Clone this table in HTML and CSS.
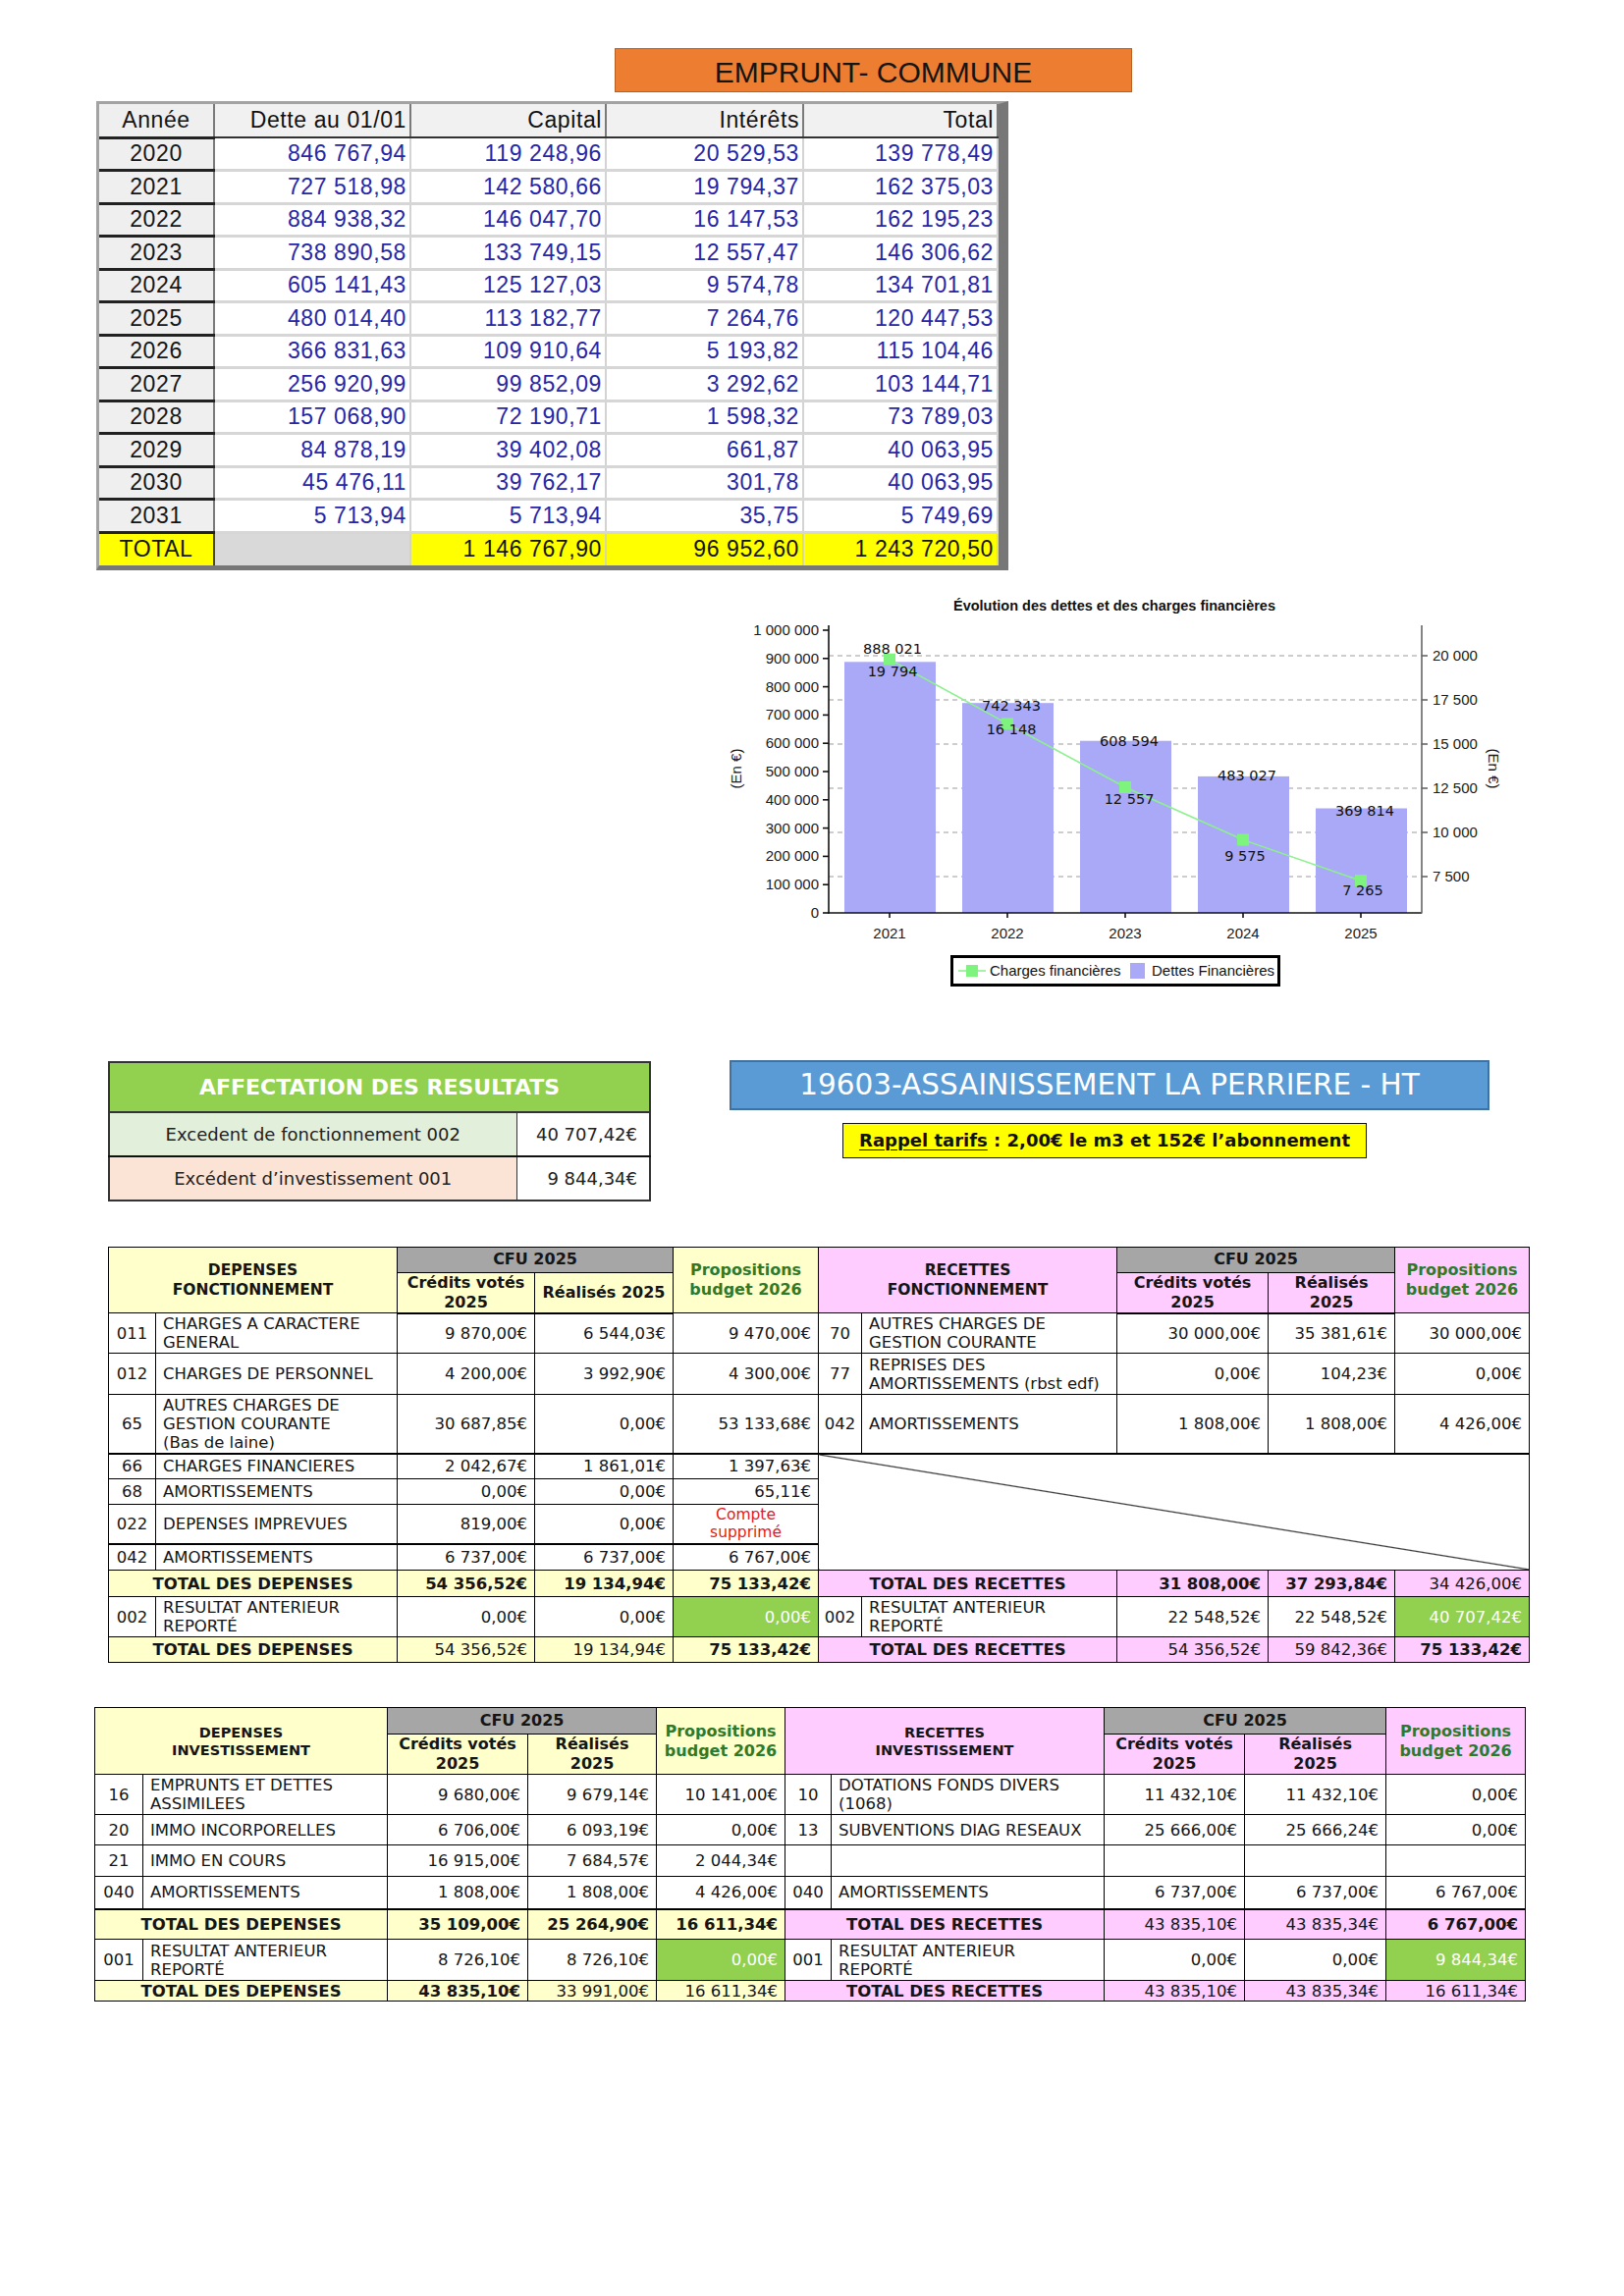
FILE: index.html
```html
<!DOCTYPE html>
<html lang="fr">
<head>
<meta charset="utf-8">
<title>Emprunt - Assainissement</title>
<link rel="stylesheet" href="styles.css">
</head>
<body>
<div class="page">
  <div class="head"><div class="orange">EMPRUNT- COMMUNE</div></div>

  <div class="loan-row">
    <div class="loan">
      <table class="loan-t">
        <colgroup><col class="w-an"><col class="w-d"><col class="w-c"><col class="w-i"><col class="w-t"></colgroup>
        <tr class="lh"><th class="yr">Année</th><th>Dette au 01/01</th><th>Capital</th><th>Intérêts</th><th>Total</th></tr>
        <tr><td class="yr">2020</td><td>846 767,94</td><td>119 248,96</td><td>20 529,53</td><td>139 778,49</td></tr>
        <tr><td class="yr">2021</td><td>727 518,98</td><td>142 580,66</td><td>19 794,37</td><td>162 375,03</td></tr>
        <tr><td class="yr">2022</td><td>884 938,32</td><td>146 047,70</td><td>16 147,53</td><td>162 195,23</td></tr>
        <tr><td class="yr">2023</td><td>738 890,58</td><td>133 749,15</td><td>12 557,47</td><td>146 306,62</td></tr>
        <tr><td class="yr">2024</td><td>605 141,43</td><td>125 127,03</td><td>9 574,78</td><td>134 701,81</td></tr>
        <tr><td class="yr">2025</td><td>480 014,40</td><td>113 182,77</td><td>7 264,76</td><td>120 447,53</td></tr>
        <tr><td class="yr">2026</td><td>366 831,63</td><td>109 910,64</td><td>5 193,82</td><td>115 104,46</td></tr>
        <tr><td class="yr">2027</td><td>256 920,99</td><td>99 852,09</td><td>3 292,62</td><td>103 144,71</td></tr>
        <tr><td class="yr">2028</td><td>157 068,90</td><td>72 190,71</td><td>1 598,32</td><td>73 789,03</td></tr>
        <tr><td class="yr">2029</td><td>84 878,19</td><td>39 402,08</td><td>661,87</td><td>40 063,95</td></tr>
        <tr><td class="yr">2030</td><td>45 476,11</td><td>39 762,17</td><td>301,78</td><td>40 063,95</td></tr>
        <tr><td class="yr">2031</td><td>5 713,94</td><td>5 713,94</td><td>35,75</td><td>5 749,69</td></tr>
        <tr class="ltot"><td class="yr ytot">TOTAL</td><td class="gtot"></td><td>1 146 767,90</td><td>96 952,60</td><td>1 243 720,50</td></tr>
      </table>
    </div>
  </div>

  <div class="chart-row">
    <svg class="chart" width="820" height="420" viewBox="730 600 820 420" xmlns="http://www.w3.org/2000/svg">
      <text x="1135" y="621" text-anchor="middle" class="c-title">Évolution des dettes et des charges financières</text>
      <g stroke="#bdbdbd" stroke-width="1.3" stroke-dasharray="5 4">
        <line x1="844" y1="667" x2="1448" y2="667"/>
        <line x1="844" y1="712" x2="1448" y2="712"/>
        <line x1="844" y1="757" x2="1448" y2="757"/>
        <line x1="844" y1="802" x2="1448" y2="802"/>
        <line x1="844" y1="847" x2="1448" y2="847"/>
        <line x1="844" y1="892" x2="1448" y2="892"/>
      </g>
      <g fill="#a9a9f7">
        <rect x="860" y="673.3" width="93" height="255.7"/>
        <rect x="980" y="715.2" width="93" height="213.8"/>
        <rect x="1100" y="753.7" width="93" height="175.3"/>
        <rect x="1220" y="789.9" width="93" height="139.1"/>
        <rect x="1340" y="822.5" width="93" height="106.5"/>
      </g>
      <g stroke="#111" stroke-width="1.6">
        <line x1="844" y1="636" x2="844" y2="929.5"/>
        <line x1="843" y1="929" x2="1448" y2="929"/>
        <line x1="838" y1="641" x2="844" y2="641"/>
        <line x1="838" y1="669.8" x2="844" y2="669.8"/>
        <line x1="838" y1="698.6" x2="844" y2="698.6"/>
        <line x1="838" y1="727.4" x2="844" y2="727.4"/>
        <line x1="838" y1="756.2" x2="844" y2="756.2"/>
        <line x1="838" y1="785" x2="844" y2="785"/>
        <line x1="838" y1="813.8" x2="844" y2="813.8"/>
        <line x1="838" y1="842.6" x2="844" y2="842.6"/>
        <line x1="838" y1="871.4" x2="844" y2="871.4"/>
        <line x1="838" y1="900.2" x2="844" y2="900.2"/>
        <line x1="838" y1="929" x2="844" y2="929"/>
        <line x1="906" y1="929" x2="906" y2="934"/>
        <line x1="1026" y1="929" x2="1026" y2="934"/>
        <line x1="1146" y1="929" x2="1146" y2="934"/>
        <line x1="1266" y1="929" x2="1266" y2="934"/>
        <line x1="1386" y1="929" x2="1386" y2="934"/>
      </g>
      <g stroke="#666" stroke-width="1.6">
        <line x1="1448" y1="636" x2="1448" y2="929.5"/>
        <line x1="1448" y1="667" x2="1454" y2="667"/>
        <line x1="1448" y1="712" x2="1454" y2="712"/>
        <line x1="1448" y1="757" x2="1454" y2="757"/>
        <line x1="1448" y1="802" x2="1454" y2="802"/>
        <line x1="1448" y1="847" x2="1454" y2="847"/>
        <line x1="1448" y1="892" x2="1454" y2="892"/>
      </g>
      <g class="c-ax" text-anchor="end">
        <text x="834" y="646">1 000 000</text>
        <text x="834" y="674.8">900 000</text>
        <text x="834" y="703.6">800 000</text>
        <text x="834" y="732.4">700 000</text>
        <text x="834" y="761.2">600 000</text>
        <text x="834" y="790">500 000</text>
        <text x="834" y="818.8">400 000</text>
        <text x="834" y="847.6">300 000</text>
        <text x="834" y="876.4">200 000</text>
        <text x="834" y="905.2">100 000</text>
        <text x="834" y="934">0</text>
      </g>
      <g class="c-ax" text-anchor="start">
        <text x="1459" y="672">20 000</text>
        <text x="1459" y="717">17 500</text>
        <text x="1459" y="762">15 000</text>
        <text x="1459" y="807">12 500</text>
        <text x="1459" y="852">10 000</text>
        <text x="1459" y="897">7 500</text>
      </g>
      <g class="c-ax" text-anchor="middle">
        <text x="906" y="955">2021</text>
        <text x="1026" y="955">2022</text>
        <text x="1146" y="955">2023</text>
        <text x="1266" y="955">2024</text>
        <text x="1386" y="955">2025</text>
      </g>
      <text class="c-ax" text-anchor="middle" x="750" y="787" transform="rotate(-90 750 782)">(En €)</text>
      <text class="c-ax" text-anchor="middle" x="1521" y="787" transform="rotate(90 1521 782)">(En €)</text>
      <polyline points="906,670.7 1026,736.3 1146,801 1266,854.6 1386,896.2" fill="none" stroke="#8ef08e" stroke-width="1.6"/>
      <g fill="#7ef47e">
        <rect x="900" y="664.7" width="12" height="12"/>
        <rect x="1020" y="730.3" width="12" height="12"/>
        <rect x="1140" y="795" width="12" height="12"/>
        <rect x="1260" y="848.6" width="12" height="12"/>
        <rect x="1380" y="890.2" width="12" height="12"/>
      </g>
      <g class="c-dl" text-anchor="middle">
        <text x="909" y="665">888 021</text>
        <text x="909" y="688">19 794</text>
        <text x="1030" y="723">742 343</text>
        <text x="1030" y="747">16 148</text>
        <text x="1150" y="759">608 594</text>
        <text x="1150" y="818">12 557</text>
        <text x="1270" y="794">483 027</text>
        <text x="1268" y="876">9 575</text>
        <text x="1390" y="830">369 814</text>
        <text x="1388" y="911">7 265</text>
      </g>
      <rect x="969.5" y="973.5" width="333" height="29" fill="#fff" stroke="#000" stroke-width="3"/>
      <line x1="976" y1="988" x2="1004" y2="988" stroke="#8ef08e" stroke-width="1.6"/>
      <rect x="984" y="982" width="12" height="12" fill="#7ef47e"/>
      <text class="c-lg" x="1008" y="993">Charges financières</text>
      <rect x="1151" y="980" width="15" height="16" fill="#a9a9f7"/>
      <text class="c-lg" x="1173" y="993">Dettes Financières</text>
    </svg>
  </div>

  <div class="mid">
    <table class="aff">
      <colgroup><col class="aff-c1"><col class="aff-c2"></colgroup>
      <tr><th colspan="2">AFFECTATION DES RESULTATS</th></tr>
      <tr class="aff-r1"><td class="aff-l fon">Excedent de fonctionnement 002</td><td class="aff-v">40 707,42€</td></tr>
      <tr><td class="aff-l inv">Excédent d’investissement 001</td><td class="aff-v">9 844,34€</td></tr>
    </table>
    <div class="mid-right">
      <div class="blue">19603-ASSAINISSEMENT LA PERRIERE - HT</div>
      <div class="yel"><span class="u">Rappel tarifs</span>&nbsp;: 2,00€ le m3 et 152€ l’abonnement</div>
    </div>
  </div>

  <div class="fonct-row">
    <table class="bud fonct">
      <colgroup>
        <col style="width:48px"><col style="width:246px"><col style="width:140px"><col style="width:141px"><col style="width:148px">
        <col style="width:44px"><col style="width:260px"><col style="width:154px"><col style="width:129px"><col style="width:137px">
      </colgroup>
      <tr class="f-h1">
        <th colspan="2" rowspan="2" class="cy hm">DEPENSES<br>FONCTIONNEMENT</th>
        <th colspan="2" class="cg">CFU 2025</th>
        <th rowspan="2" class="cy prop">Propositions<br>budget 2026</th>
        <th colspan="2" rowspan="2" class="cp hm">RECETTES<br>FONCTIONNEMENT</th>
        <th colspan="2" class="cg">CFU 2025</th>
        <th rowspan="2" class="cp prop">Propositions<br>budget 2026</th>
      </tr>
      <tr class="f-h2 thick">
        <th class="cy">Crédits votés<br>2025</th><th class="cy">Réalisés 2025</th>
        <th class="cp">Crédits votés<br>2025</th><th class="cp">Réalisés<br>2025</th>
      </tr>
      <tr class="f-r41">
        <td class="code">011</td><td class="lbl">CHARGES A CARACTERE<br>GENERAL</td><td class="num">9 870,00€</td><td class="num">6 544,03€</td><td class="num">9 470,00€</td>
        <td class="code">70</td><td class="lbl">AUTRES CHARGES DE<br>GESTION COURANTE</td><td class="num">30 000,00€</td><td class="num">35 381,61€</td><td class="num">30 000,00€</td>
      </tr>
      <tr class="f-r42">
        <td class="code">012</td><td class="lbl">CHARGES DE PERSONNEL</td><td class="num">4 200,00€</td><td class="num">3 992,90€</td><td class="num">4 300,00€</td>
        <td class="code">77</td><td class="lbl">REPRISES DES<br>AMORTISSEMENTS (rbst edf)</td><td class="num">0,00€</td><td class="num">104,23€</td><td class="num">0,00€</td>
      </tr>
      <tr class="f-r60 thick">
        <td class="code">65</td><td class="lbl">AUTRES CHARGES DE<br>GESTION COURANTE<br>(Bas de laine)</td><td class="num">30 687,85€</td><td class="num">0,00€</td><td class="num">53 133,68€</td>
        <td class="code">042</td><td class="lbl">AMORTISSEMENTS</td><td class="num">1 808,00€</td><td class="num">1 808,00€</td><td class="num">4 426,00€</td>
      </tr>
      <tr class="f-r26">
        <td class="code">66</td><td class="lbl">CHARGES FINANCIERES</td><td class="num">2 042,67€</td><td class="num">1 861,01€</td><td class="num">1 397,63€</td>
        <td colspan="5" rowspan="4" class="diag"></td>
      </tr>
      <tr class="f-r26">
        <td class="code">68</td><td class="lbl">AMORTISSEMENTS</td><td class="num">0,00€</td><td class="num">0,00€</td><td class="num">65,11€</td>
      </tr>
      <tr class="f-r40 thick-l">
        <td class="code">022</td><td class="lbl">DEPENSES IMPREVUES</td><td class="num">819,00€</td><td class="num">0,00€</td><td class="red">Compte<br>supprimé</td>
      </tr>
      <tr class="f-r27">
        <td class="code">042</td><td class="lbl">AMORTISSEMENTS</td><td class="num">6 737,00€</td><td class="num">6 737,00€</td><td class="num">6 767,00€</td>
      </tr>
      <tr class="f-r27">
        <td colspan="2" class="cy tt">TOTAL DES DEPENSES</td><td class="cy num b">54 356,52€</td><td class="cy num b">19 134,94€</td><td class="cy num b">75 133,42€</td>
        <td colspan="2" class="cp tt">TOTAL DES RECETTES</td><td class="cp num b">31 808,00€</td><td class="cp num b">37 293,84€</td><td class="cp num">34 426,00€</td>
      </tr>
      <tr class="f-r41">
        <td class="code">002</td><td class="lbl">RESULTAT ANTERIEUR<br>REPORTÉ</td><td class="num">0,00€</td><td class="num">0,00€</td><td class="num green">0,00€</td>
        <td class="code">002</td><td class="lbl">RESULTAT ANTERIEUR<br>REPORTÉ</td><td class="num">22 548,52€</td><td class="num">22 548,52€</td><td class="num green">40 707,42€</td>
      </tr>
      <tr class="f-r26">
        <td colspan="2" class="cy tt">TOTAL DES DEPENSES</td><td class="cy num">54 356,52€</td><td class="cy num">19 134,94€</td><td class="cy num b">75 133,42€</td>
        <td colspan="2" class="cp tt">TOTAL DES RECETTES</td><td class="cp num">54 356,52€</td><td class="cp num">59 842,36€</td><td class="cp num b">75 133,42€</td>
      </tr>
    </table>
  </div>

  <div class="inv-row">
    <table class="bud inv">
      <colgroup>
        <col style="width:49px"><col style="width:249px"><col style="width:143px"><col style="width:131px"><col style="width:131px">
        <col style="width:47px"><col style="width:278px"><col style="width:143px"><col style="width:144px"><col style="width:142px">
      </colgroup>
      <tr class="i-h1">
        <th colspan="2" rowspan="2" class="cy hs">DEPENSES<br>INVESTISSEMENT</th>
        <th colspan="2" class="cg">CFU 2025</th>
        <th rowspan="2" class="cy prop">Propositions<br>budget 2026</th>
        <th colspan="2" rowspan="2" class="cp hs">RECETTES<br>INVESTISSEMENT</th>
        <th colspan="2" class="cg">CFU 2025</th>
        <th rowspan="2" class="cp prop">Propositions<br>budget 2026</th>
      </tr>
      <tr class="i-h2">
        <th class="cy">Crédits votés<br>2025</th><th class="cy">Réalisés<br>2025</th>
        <th class="cp">Crédits votés<br>2025</th><th class="cp">Réalisés<br>2025</th>
      </tr>
      <tr class="i-r41">
        <td class="code">16</td><td class="lbl">EMPRUNTS ET DETTES<br>ASSIMILEES</td><td class="num">9 680,00€</td><td class="num">9 679,14€</td><td class="num">10 141,00€</td>
        <td class="code">10</td><td class="lbl">DOTATIONS FONDS DIVERS<br>(1068)</td><td class="num">11 432,10€</td><td class="num">11 432,10€</td><td class="num">0,00€</td>
      </tr>
      <tr class="i-r31">
        <td class="code">20</td><td class="lbl">IMMO INCORPORELLES</td><td class="num">6 706,00€</td><td class="num">6 093,19€</td><td class="num">0,00€</td>
        <td class="code">13</td><td class="lbl">SUBVENTIONS DIAG RESEAUX</td><td class="num">25 666,00€</td><td class="num">25 666,24€</td><td class="num">0,00€</td>
      </tr>
      <tr class="i-r32">
        <td class="code">21</td><td class="lbl">IMMO EN COURS</td><td class="num">16 915,00€</td><td class="num">7 684,57€</td><td class="num">2 044,34€</td>
        <td class="code"></td><td class="lbl"></td><td class="num"></td><td class="num"></td><td class="num"></td>
      </tr>
      <tr class="i-r33 thick">
        <td class="code">040</td><td class="lbl">AMORTISSEMENTS</td><td class="num">1 808,00€</td><td class="num">1 808,00€</td><td class="num">4 426,00€</td>
        <td class="code">040</td><td class="lbl">AMORTISSEMENTS</td><td class="num">6 737,00€</td><td class="num">6 737,00€</td><td class="num">6 767,00€</td>
      </tr>
      <tr class="i-r31">
        <td colspan="2" class="cy tt">TOTAL DES DEPENSES</td><td class="cy num b">35 109,00€</td><td class="cy num b">25 264,90€</td><td class="cy num b">16 611,34€</td>
        <td colspan="2" class="cp tt">TOTAL DES RECETTES</td><td class="cp num">43 835,10€</td><td class="cp num">43 835,34€</td><td class="cp num b">6 767,00€</td>
      </tr>
      <tr class="i-r42">
        <td class="code">001</td><td class="lbl">RESULTAT ANTERIEUR<br>REPORTÉ</td><td class="num">8 726,10€</td><td class="num">8 726,10€</td><td class="num green">0,00€</td>
        <td class="code">001</td><td class="lbl">RESULTAT ANTERIEUR<br>REPORTÉ</td><td class="num">0,00€</td><td class="num">0,00€</td><td class="num green">9 844,34€</td>
      </tr>
      <tr class="i-r21">
        <td colspan="2" class="cy tt">TOTAL DES DEPENSES</td><td class="cy num b">43 835,10€</td><td class="cy num">33 991,00€</td><td class="cy num">16 611,34€</td>
        <td colspan="2" class="cp tt">TOTAL DES RECETTES</td><td class="cp num">43 835,10€</td><td class="cp num">43 835,34€</td><td class="cp num">16 611,34€</td>
      </tr>
    </table>
  </div>
</div>
</body>
</html>
```

FILE: styles.css
```css
* { box-sizing: border-box; }
html, body { margin: 0; padding: 0; background: #fff; }
body { font-family: "DejaVu Sans", "Noto Sans", sans-serif; color: #111; }
.page { width: 1654px; height: 2339px; overflow: hidden; }

/* ---- title ---- */
.head { padding: 49px 0 0 626px; }
.orange {
  width: 527px; height: 45px;
  background: #ed7d31; border: 1px solid #b8601f;
  display: flex; align-items: center; justify-content: center;
  font-family: "Liberation Sans Narrow", "Liberation Sans", sans-serif;
  font-size: 30px; color: #151515; padding-top: 4px;
}

/* ---- loan table ---- */
.loan-row { padding: 9px 0 0 98px; }
.loan {
  display: inline-block;
  border-top: 3px solid #a3a3a3; border-left: 3px solid #a3a3a3;
  border-right: 10px solid #777; border-bottom: 5px solid #777;
  box-shadow: inset -1px -1px 0 #222;
}
.loan-t {
  border-collapse: collapse; table-layout: fixed; width: 915px;
  font-family: "Liberation Sans Narrow", "Liberation Sans", sans-serif;
  font-size: 23px; letter-spacing: 0.6px;
}
.w-an { width: 117px; } .w-d { width: 200px; } .w-c { width: 199px; } .w-i { width: 201px; } .w-t { width: 198px; }
.loan-t th {
  height: 34px; font-weight: normal; text-align: right; padding: 0 3px 0 0;
  background: #f1f1f1; color: #111;
  border-right: 2px solid #7a7a7a; border-bottom: 2px solid #333;
}
.loan-t td {
  height: 33.5px; text-align: right; padding: 0 3px 0 0; color: #2626a8;
  border-right: 2px solid #d3d3d3; border-bottom: 3px solid #d6d6d6;
  background: #fff;
}
.loan-t .yr {
  text-align: center; padding: 0; color: #151515; background: #efefef;
  border-right: 2px solid #7a7a7a; border-bottom: 3px solid #222;
}
.loan-t .ltot td { background: #ffff00; color: #151515; border-bottom: 0; border-right: 2px solid #d8d8a0; }
.loan-t .ltot .ytot { background: #ffff00; border-right: 2px solid #444; }
.loan-t .ltot .gtot { background: #d9d9d9; }

/* ---- chart ---- */
.chart-row { padding: 16px 0 0 730px; height: 443px; }
.chart { display: block; }
.c-title { font-family: "Liberation Sans", sans-serif; font-size: 14.5px; font-weight: bold; fill: #111; }
.c-ax { font-family: "Liberation Sans", sans-serif; font-size: 15px; fill: #1a1a1a; }
.c-dl { font-family: "DejaVu Sans", sans-serif; font-size: 14.5px; fill: #111; }
.c-lg { font-family: "Liberation Sans", sans-serif; font-size: 15px; fill: #111; }

/* ---- middle ---- */
.mid { display: flex; align-items: flex-start; padding: 53px 0 0 110px; }
.aff { width: 551px; border-collapse: collapse; border: 2px solid #333; table-layout: fixed; }
.aff-c1 { width: 415px; } .aff-c2 { width: 136px; }
.aff th {
  height: 51px; background: #92d050; color: #fff; font-size: 22px; font-weight: bold;
  border: 2px solid #333;
}
.aff td { height: 45px; font-size: 18px; color: #222; border: 1px solid #333; white-space: nowrap; }
.aff .aff-r1 td { border-bottom: 2px solid #111; }
.aff-l { text-align: center; }
.aff-l.fon { background: #e2efda; }
.aff-l.inv { background: #fbe4d6; }
.aff-v { text-align: right; padding-right: 12px; background: #fff; }
.mid-right { margin-left: 80px; margin-top: -1px; width: 774px; }
.blue {
  height: 51px; background: #5b9bd5; border: 2px solid #41719c; color: #fff;
  display: flex; align-items: center; justify-content: center;
  font-size: 29.5px;
}
.yel {
  width: 534px; height: 36px; margin: 13px 0 0 115px;
  background: #ffff00; border: 1.5px solid #111;
  display: flex; align-items: center; justify-content: center;
  font-size: 18px; font-weight: bold; color: #111; white-space: nowrap;
}
.u { text-decoration: underline; text-underline-offset: 3px; }

/* ---- budget tables ---- */
.fonct-row { padding: 46px 0 0 110px; }
.inv-row { padding: 45px 0 0 96px; }
.bud { border-collapse: collapse; table-layout: fixed; font-size: 16.5px; line-height: 19px; color: #151515; }
.fonct { width: 1447px; }
.bud.inv { width: 1457px; }
.bud td, .bud th { border: 1px solid #000; padding: 0 7px; white-space: nowrap; overflow: hidden; }
.bud th { font-weight: bold; text-align: center; line-height: 20px; padding: 0 2px; font-size: 16px; }
.bud .hm { font-size: 15.5px; }
.bud .hs { font-size: 14.5px; line-height: 18px; }
.cy { background: #ffffcc; }
.cp { background: #ffccff; }
.cg { background: #a6a6a6; }
.bud th.prop { color: #2f7a2a; }
.code { text-align: center; padding: 0 !important; }
.num { text-align: right; }
.lbl { text-align: left; }
.tt { font-weight: bold; text-align: center; }
.b { font-weight: bold; }
.bud td.green { background: #92d050; color: #fff; }
.bud td.red { color: #e31b1b; text-align: center; font-size: 15.5px; line-height: 18px; }
.bud tr.thick td, .bud tr.thick th { border-bottom: 2px solid #000; }
.bud tr.thick-l td { border-bottom: 2px solid #000; }
.diag {
  background: linear-gradient(to top right, #fff calc(50% - 1.2px), #333 50%, #fff calc(50% + 1.2px));
  border-top: 2px solid #000 !important;
}

.f-h1 { height: 26px; } .f-h2 { height: 40px; }
.f-r41 { height: 41px; } .f-r42 { height: 42px; } .f-r60 { height: 60px; }
.f-r26 { height: 26px; } .f-r40 { height: 40px; } .f-r27 { height: 27px; }
.i-h1 { height: 27px; } .i-h2 { height: 41px; }
.i-r41 { height: 41px; } .i-r31 { height: 31px; } .i-r32 { height: 32px; }
.i-r33 { height: 33px; } .i-r42 { height: 42px; } .i-r21 { height: 21px; }
```
